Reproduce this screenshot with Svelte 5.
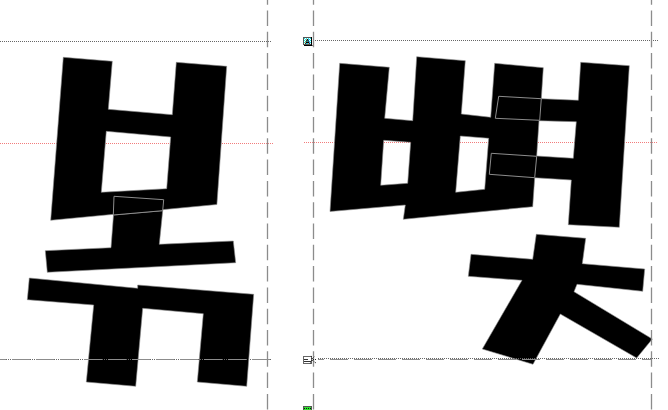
<script lang="ts">
    const outlines = [
        // left glyph
        'M63.3 57.3L112.3 61.3L108.3 109.3L172.3 114.7L176.3 62.3L226.7 66.3L216.9 204.5L50.7 220.3Z M106.3 131.3L170.7 137L166.7 188.7L101.3 192.3Z',
        'M113.5 215L162.7 210.7L159.3 244.3L233.3 241L235.7 262.7L47.3 272.3L45.3 250.7L111 247.7Z',
        'M29.3 278L137.7 288.3L137.7 285L253.7 294.3L246.7 386.3L197.3 382L203.3 313.7L142.7 308.3L135.7 386.3L86.3 382L93.7 305L27.3 299.7Z',
        // right glyph
        'M339.7 63.3L389.3 67.3L384.7 118.3L412.7 120.7L416.7 56.7L465.3 60.7L461.3 114L490.7 117.3L494.7 63.3L543.3 67.7L541.3 98.7L578.3 100.3L580.7 62.3L629.3 65.7L619.3 227.3L568.3 224.7L571.3 180L534.7 177.7L532.7 206.7L403.3 219.3L405.3 205L330 211.5Z M383.7 140.3L410.7 142.3L407.7 183.3L380.7 185.3Z M460.3 136L488.7 138.3L484.7 189.3L455.7 192.3Z M539 120.7L576.3 121.7L573.3 158.3L536.7 156Z',
        'M536.3 234.3L585.7 238.3L582.3 263.7L644.7 269L642.7 291.3L577 284.3L574 291.7L652.3 339L636.7 358L560.3 314L533 364.3L482.3 349L522 280.3L468.3 276.3L471 254.3L532.7 259.3Z'
    ]
    const overlaps = [
        'M114 196.3L163.7 199.7L162.7 210.7L113.3 215Z',
        'M498.7 96.3L541.3 98.7L539.7 120.3L495.3 118.3Z',
        'M491.3 153.3L536.7 156.3L534.7 177.7L489.3 174.3Z'
    ]
</script>

<svg class="canvas" width="668" height="410" viewBox="0 0 668 410">
    <defs>
        <pattern id="cyan" width="2" height="2" patternUnits="userSpaceOnUse">
            <rect width="2" height="2" fill="#fff" />
            <rect width="1" height="1" fill="#19e6e6" />
            <rect x="1" y="1" width="1" height="1" fill="#19e6e6" />
        </pattern>
        <pattern id="green" width="2" height="2" patternUnits="userSpaceOnUse">
            <rect width="2" height="2" fill="#2ee62e" />
            <rect width="1" height="1" fill="#111" />
        </pattern>
    </defs>

    <!-- guides under the outlines -->
    <g class="dots">
        <line x1="0" y1="41.5" x2="272" y2="41.5" />
        <line x1="315" y1="40.5" x2="659" y2="40.5" />
    </g>
    <g class="dots red">
        <line x1="0" y1="143.5" x2="273" y2="143.5" />
        <line x1="304" y1="142.5" x2="658" y2="142.5" />
    </g>

    {#each outlines as d}
        <path class="glyph" fill-rule="evenodd" d={d} />
    {/each}
    {#each overlaps as d}
        <path class="overlap" d={d} />
    {/each}

    <g class="dots">
        <line x1="0" y1="359.5" x2="272" y2="359.5" />
        <line x1="318" y1="358.5" x2="659" y2="358.5" />
    </g>
    <g class="baseline">
        <line x1="0" y1="359.5" x2="272" y2="359.5" />
        <line x1="318" y1="359.5" x2="652" y2="359.5" />
    </g>
    <g class="bearing">
        <line x1="267.5" y1="0" x2="267.5" y2="410" />
        <line x1="313.5" y1="0" x2="313.5" y2="410" />
        <line x1="651.5" y1="0" x2="651.5" y2="410" />
    </g>

    <!-- markers on the left side bearing -->
    <rect x="303.5" y="37.5" width="8" height="7" fill="url(#cyan)" stroke="#555" />
    <path d="M304 45.5h8.5M311.5 37v8" stroke="#000" />
    <text class="mark" x="307.5" y="44">A</text>

    <rect x="303.5" y="356.5" width="8" height="7" fill="#fff" stroke="#666" />
    <path d="M304 359.5h4M304 361.5h7" stroke="#333" />
    <path d="M312 359l-1-4M312 359l3-3M312 360l4 3M312 360l-2 4M313 359.5h4" class="ray" />

    <rect x="303.5" y="406.5" width="8" height="5" fill="url(#green)" stroke="#555" />
</svg>

<style>
    :global(body) {
        margin: 0;
        background: #fff;
    }
    .canvas {
        display: block;
    }
    .glyph {
        fill: #000;
        stroke: #8a8a8a;
        stroke-width: 0.6;
    }
    .overlap {
        fill: #000;
        stroke: #8c8c8c;
        stroke-width: 1;
    }
    .dots line {
        stroke: #666;
        stroke-width: 1;
        stroke-dasharray: 1 1;
    }
    .dots.red line {
        stroke: #f27c7c;
    }
    .baseline line {
        stroke: #8c8c8c;
        stroke-width: 1.2;
        stroke-dasharray: 18 6;
        stroke-dashoffset: 12;
    }
    .bearing line {
        stroke: #8c8c8c;
        stroke-width: 1.3;
        stroke-dasharray: 15.5 5.8;
        stroke-dashoffset: 10.8;
    }
    .mark {
        font-family: "Liberation Sans", sans-serif;
        font-size: 7px;
        font-weight: bold;
        text-anchor: middle;
        fill: #000;
    }
    .ray {
        stroke: #222;
        fill: none;
        stroke-dasharray: 1 1;
    }
</style>
